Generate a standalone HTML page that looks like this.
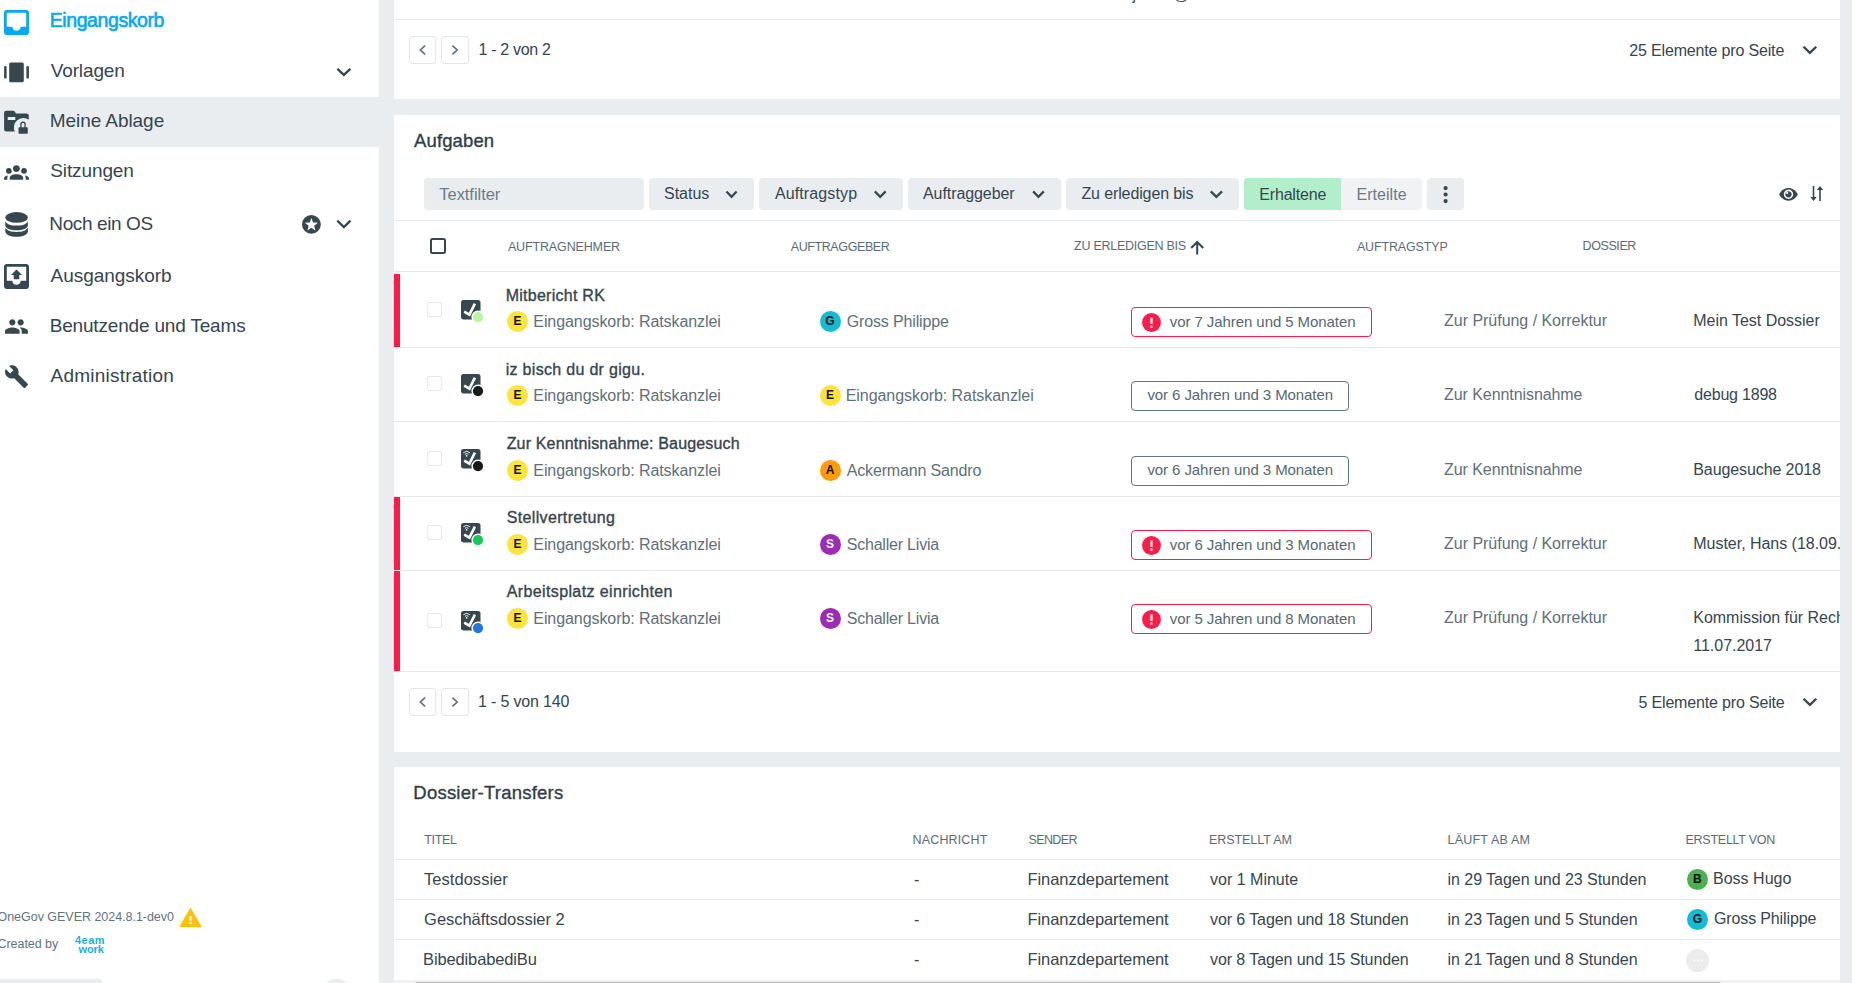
<!DOCTYPE html>
<html><head><meta charset="utf-8"><style>
html,body{margin:0;padding:0;}
body{width:1852px;height:983px;overflow:hidden;position:relative;background:#e9edf0;font-family:"Liberation Sans",sans-serif;}
span{position:absolute;white-space:nowrap;line-height:1;}
svg{display:block;}
</style></head><body>
<div style="position:absolute;left:0px;top:0px;width:379px;height:983px;background:#fff;"></div>
<div style="position:absolute;left:0px;top:97px;width:379px;height:50px;background:#e9edf0;"></div>
<div style="position:absolute;left:394px;top:0px;width:1446px;height:99px;background:#fff;"></div>
<div style="position:absolute;left:394px;top:115px;width:1446px;height:637px;background:#fff;"></div>
<div style="position:absolute;left:394px;top:767px;width:1446px;height:216px;background:#fff;"></div>
<svg style="position:absolute;left:4px;top:10px;" width="25" height="25" viewBox="3 3 18 18"><path fill="#03a9f4" d="M19 3H4.99c-1.11 0-1.98.89-1.98 2L3 19c0 1.1.88 2 1.99 2H19c1.1 0 2-.9 2-2V5c0-1.11-.9-2-2-2zm0 12h-4c0 1.66-1.35 3-3 3s-3-1.34-3-3H4.99V5H19v10z"/></svg>
<svg style="position:absolute;left:0px;top:55px;" width="40" height="30" viewBox="0 0 40 30"><rect x="4.1" y="11.1" width="2.5" height="12.5" rx="1.2" fill="#36474f"/><rect x="9.2" y="7.5" width="14.6" height="19.8" rx="1.5" fill="#36474f"/><rect x="26.4" y="11.1" width="2.5" height="12.5" rx="1.2" fill="#36474f"/></svg>
<svg style="position:absolute;left:0px;top:105px;" width="40" height="35" viewBox="0 0 40 35"><path fill="#36474f" fill-rule="evenodd" d="M6.1 5.7 H13.4 A1.2 1.2 0 0 1 14.4 6.2 L16 8.4 H26.6 A2.2 2.2 0 0 1 28.8 10.6 V14.6 A9.5 9.5 0 0 0 14.8 26.5 H6.3 A2.2 2.2 0 0 1 4.1 24.3 V7.8 A2.1 2.1 0 0 1 6.1 5.7 Z M7.7 11.9 V15 H15.3 V11.9 Z"/>
<path fill="#36474f" fill-rule="evenodd" d="M19.5 22.3 H20.3 V19.2 A2.7 2.7 0 0 1 25.7 19.2 V22.3 H26.8 A1 1 0 0 1 27.8 23.3 V27.8 A1 1 0 0 1 26.8 28.8 H19.5 A1 1 0 0 1 18.5 27.8 V23.3 A1 1 0 0 1 19.5 22.3 Z M21.6 22.3 H24.4 V19.3 A1.4 1.4 0 0 0 21.6 19.3 Z"/></svg>
<svg style="position:absolute;left:0px;top:155px;" width="40" height="35" viewBox="0 0 40 35"><g fill="#36474f"><circle cx="16.4" cy="13.6" r="3.4"/><circle cx="8.9" cy="15.8" r="2.9"/><circle cx="24" cy="15.8" r="2.9"/>
<path d="M9.8 24.8 V22.6 C9.8 20.5 12.6 19.2 16.4 19.2 C20.2 19.2 23.1 20.5 23.1 22.6 V24.8 Z"/>
<path d="M4 24.8 V23.4 C4 21.9 5.5 20.7 8 20.4 C7.5 21.2 7.3 22 7.3 22.8 V24.8 Z"/>
<path d="M29 24.8 V23.4 C29 21.9 27.5 20.7 25 20.4 C25.5 21.2 25.7 22 25.7 22.8 V24.8 Z"/></g>
<circle cx="16.4" cy="13.6" r="4.4" fill="none" stroke="#fff" stroke-width="1.1"/></svg>
<svg style="position:absolute;left:0px;top:205px;" width="40" height="40" viewBox="0 0 40 40"><ellipse cx="16.6" cy="12.4" rx="11.3" ry="5.3" fill="#36474f"/>
<path fill="#36474f" d="M5.3 16.2 C7 19.6 11.5 20.6 16.6 20.6 C21.7 20.6 26.2 19.6 27.9 16.2 V20.2 C27.9 23.1 22.9 25.3 16.6 25.3 C10.3 25.3 5.3 23.1 5.3 20.2 Z"/>
<path fill="#36474f" d="M5.3 22.6 C7 26 11.5 27 16.6 27 C21.7 27 26.2 26 27.9 22.6 V26.4 C27.9 29.3 22.9 31.7 16.6 31.7 C10.3 31.7 5.3 29.3 5.3 26.4 Z"/></svg>
<svg style="position:absolute;left:4px;top:264px;" width="25" height="25" viewBox="3 3 18 18"><path fill="#36474f" d="M19 3H5c-1.1 0-2 .9-2 2v14c0 1.1.9 2 2 2h14c1.1 0 2-.9 2-2V5c0-1.1-.9-2-2-2zm0 12h-4c0 1.66-1.34 3-3 3s-3-1.34-3-3H5V5h14v10zM8 11h2v3h4v-3h2l-4-4-4 4z"/></svg>
<svg style="position:absolute;left:4px;top:313.6px;" width="25" height="25" viewBox="0 0 24 24"><path fill="#36474f" d="M16 11c1.66 0 2.99-1.34 2.99-3S17.66 5 16 5c-1.66 0-3 1.34-3 3s1.34 3 3 3zm-8 0c1.66 0 2.99-1.34 2.99-3S9.66 5 8 5C6.34 5 5 6.34 5 8s1.34 3 3 3zm0 2c-2.33 0-7 1.17-7 3.5V19h14v-2.5c0-2.33-4.67-3.5-7-3.5zm8 0c-.29 0-.62.02-.97.05 1.16.84 1.97 1.97 1.97 3.45V19h6v-2.5c0-2.330-4.67-3.5-7-3.5z"/></svg>
<svg style="position:absolute;left:4px;top:364px;" width="25" height="25" viewBox="0 0 24 24"><path fill="#36474f" d="M22.7 19l-9.1-9.1c.9-2.3.4-5-1.5-6.9-2-2-5-2.4-7.4-1.3L9 6 6 9 1.6 4.7C.4 7.1.9 10.1 2.9 12.1c1.9 1.9 4.6 2.4 6.9 1.5l9.1 9.1c.4.4 1 .4 1.4 0l2.3-2.3c.5-.4.5-1.1.1-1.4z"/></svg>
<svg style="position:absolute;left:300px;top:213px;" width="24" height="24" viewBox="0 0 24 24"><circle cx="11.4" cy="11.4" r="9.4" fill="#36474f"/><polygon fill="#fff" points="11.40,5.00 13.10,9.55 17.96,9.77 14.16,12.80 15.46,17.48 11.40,14.80 7.34,17.48 8.64,12.80 4.84,9.77 9.70,9.55"/></svg>
<svg style="position:absolute;left:178px;top:906px;" width="25" height="22" viewBox="0 0 25 22"><path d="M1.2 21 L12.5 1.4 L23.8 21 Z" fill="#ffc107"/><rect x="11.5" y="10" width="2" height="4.6" fill="#fff"/><rect x="11.5" y="16" width="2" height="2" fill="#fff"/></svg>
<div style="position:absolute;left:0px;top:979px;width:102px;height:6px;background:#e9edf0;border-top-right-radius:4px;"></div>
<div style="position:absolute;left:317.5px;top:979px;width:37px;height:37px;border-radius:50%;background:#e9edf0;"></div>
<div style="position:absolute;left:394px;top:19px;width:1446px;height:1px;background:#e5e9ec;"></div>
<div style="position:absolute;left:409px;top:36px;width:25px;height:26px;border:1px solid #e2e7ea;border-radius:3px;background:#fff"></div>
<svg style="position:absolute;left:0;top:0;overflow:visible" width="1" height="1"><polyline points="425.1,45.6 420.3,50.0 425.1,54.4" fill="none" stroke="#5b6e7a" stroke-width="1.6"/></svg>
<div style="position:absolute;left:441px;top:36px;width:26px;height:26px;border:1px solid #e2e7ea;border-radius:3px;background:#fff"></div>
<svg style="position:absolute;left:0;top:0;overflow:visible" width="1" height="1"><polyline points="452.4,45.6 457.2,50.0 452.4,54.4" fill="none" stroke="#5b6e7a" stroke-width="1.6"/></svg>
<svg style="position:absolute;left:0;top:0;overflow:visible" width="1" height="1"><polyline points="1803.5496,46.7496 1809.9,52.9032 1816.2504,46.7496" fill="none" stroke="#36474f" stroke-width="2.4" stroke-linecap="butt" stroke-miterlimit="10"/></svg>
<div style="position:absolute;left:424px;top:178px;width:220px;height:32px;background:#e9edf0;border-radius:4px"></div>
<div style="position:absolute;left:649px;top:178px;width:105px;height:32px;background:#e9edf0;border-radius:4px"></div>
<svg style="position:absolute;left:0;top:0;overflow:visible" width="1" height="1"><polyline points="726.4788000000001,191.37879999999998 731.55,196.8446 736.6211999999999,191.37879999999998" fill="none" stroke="#36474f" stroke-width="2.2" stroke-linecap="butt" stroke-miterlimit="10"/></svg>
<div style="position:absolute;left:759px;top:178px;width:144px;height:32px;background:#e9edf0;border-radius:4px"></div>
<svg style="position:absolute;left:0;top:0;overflow:visible" width="1" height="1"><polyline points="874.7788,191.37879999999998 880.2,196.8446 885.6211999999999,191.37879999999998" fill="none" stroke="#36474f" stroke-width="2.2" stroke-linecap="butt" stroke-miterlimit="10"/></svg>
<div style="position:absolute;left:908px;top:178px;width:153px;height:32px;background:#e9edf0;border-radius:4px"></div>
<svg style="position:absolute;left:0;top:0;overflow:visible" width="1" height="1"><polyline points="1033.0788,191.37879999999998 1038.4499999999998,196.8446 1043.8211999999999,191.37879999999998" fill="none" stroke="#36474f" stroke-width="2.2" stroke-linecap="butt" stroke-miterlimit="10"/></svg>
<div style="position:absolute;left:1066px;top:178px;width:173px;height:32px;background:#e9edf0;border-radius:4px"></div>
<svg style="position:absolute;left:0;top:0;overflow:visible" width="1" height="1"><polyline points="1210.7788,191.37879999999998 1216.4,196.8446 1222.0212,191.37879999999998" fill="none" stroke="#36474f" stroke-width="2.2" stroke-linecap="butt" stroke-miterlimit="10"/></svg>
<div style="position:absolute;left:1244px;top:178px;width:178px;height:32px;background:#f0f2f4;border-radius:4px;overflow:hidden"><div style="width:97px;height:32px;background:#b3eecb"></div></div>
<div style="position:absolute;left:1427px;top:178px;width:37px;height:32px;background:#e9edf0;border-radius:4px"></div>
<svg style="position:absolute;left:1440px;top:183px;" width="12" height="22" viewBox="0 0 12 22"><circle cx="5.6" cy="5.1" r="2.1" fill="#36474f"/><circle cx="5.6" cy="11.5" r="2.1" fill="#36474f"/><circle cx="5.6" cy="18.1" r="2.1" fill="#36474f"/></svg>
<svg style="position:absolute;left:1778px;top:186px;" width="21" height="16" viewBox="0 0 21 16"><path fill="#36474f" fill-rule="evenodd" d="M1.1 8.3 C3.2 4.2 6.6 1.9 10.5 1.9 C14.4 1.9 17.8 4.2 19.9 8.3 C17.8 12.4 14.4 14.7 10.5 14.7 C6.6 14.7 3.2 12.4 1.1 8.3 Z M10.5 3.6 A4.7 4.7 0 1 0 10.5 13 A4.7 4.7 0 1 0 10.5 3.6 Z"/><circle cx="10.5" cy="8.3" r="3.1" fill="#36474f"/><circle cx="9.2" cy="6.9" r="1.1" fill="#fff"/></svg>
<svg style="position:absolute;left:1806px;top:184px;" width="20" height="20" viewBox="0 0 20 20"><rect x="6.7" y="2" width="1.6" height="12" fill="#36474f"/><polygon points="4.3,13 10.7,13 7.5,17" fill="#36474f"/><rect x="13.2" y="5" width="1.6" height="12" fill="#36474f"/><polygon points="10.8,6 17.2,6 14,2" fill="#36474f"/></svg>
<div style="position:absolute;left:394px;top:220px;width:1446px;height:1px;background:#e5e9ec;"></div>
<div style="position:absolute;left:430px;top:238px;width:12.4px;height:12.4px;border:2.3px solid #36474f;border-radius:2.5px"></div>
<svg style="position:absolute;left:1188px;top:240px;" width="19" height="16" viewBox="0 0 19 16"><path d="M9.2 14.5 V2.2 M3.2 8 L9.2 2 L15.2 8" fill="none" stroke="#36474f" stroke-width="2"/></svg>
<div style="position:absolute;left:394px;top:271px;width:1446px;height:1px;background:#e5e9ec;"></div>
<div style="position:absolute;left:394px;top:274px;width:6px;height:73px;background:#ff1a47;"></div>
<div style="position:absolute;left:394px;top:347px;width:1446px;height:1px;background:#e5e9ec;"></div>
<div style="position:absolute;left:427px;top:302.1px;width:13px;height:13px;border:1.5px solid #e5e9ec;border-radius:2px"></div>
<svg style="position:absolute;left:461px;top:300.1px;" width="24" height="24" viewBox="0 0 24 24"><defs><mask id="m300"><rect width="30" height="30" fill="#fff"/><circle cx="17" cy="17.1" r="6.6" fill="#000"/></mask></defs><g mask="url(#m300)"><rect x="0" y="0" width="19.5" height="19.4" rx="2.6" fill="#36474f"/><polyline points="3.2,11.6 8.4,14.6 13.9,3.6" fill="none" stroke="#fff" stroke-width="2.6"/></g><circle cx="17" cy="17.1" r="5.1" fill="#bdf4a2"/></svg>
<div style="position:absolute;left:507.0px;top:311.0px;width:21px;height:21px;border-radius:50%;background:#fde43a;color:#111;font:700 12px/21.5px 'Liberation Sans',sans-serif;text-align:center">E</div>
<div style="position:absolute;left:819.5px;top:311.0px;width:21px;height:21px;border-radius:50%;background:#12bcd4;color:#111;font:700 12px/21.5px 'Liberation Sans',sans-serif;text-align:center">G</div>
<div style="position:absolute;left:1131px;top:307px;width:239px;height:28px;border:1px solid #ff1a47;border-radius:4px"></div>
<svg style="position:absolute;left:1141.7px;top:313px;" width="20" height="20" viewBox="0 0 20 20"><circle cx="9.5" cy="9.5" r="9.4" fill="#ff1a47"/><rect x="8.4" y="4.3" width="2.2" height="6.6" rx="0.5" fill="#fff"/><rect x="8.4" y="12.4" width="2.2" height="2.3" rx="0.5" fill="#fff"/></svg>
<div style="position:absolute;left:394px;top:421px;width:1446px;height:1px;background:#e5e9ec;"></div>
<div style="position:absolute;left:427px;top:376.1px;width:13px;height:13px;border:1.5px solid #e5e9ec;border-radius:2px"></div>
<svg style="position:absolute;left:461px;top:374.1px;" width="24" height="24" viewBox="0 0 24 24"><defs><mask id="m374"><rect width="30" height="30" fill="#fff"/><circle cx="17" cy="17.1" r="6.6" fill="#000"/></mask></defs><g mask="url(#m374)"><rect x="0" y="0" width="19.5" height="19.4" rx="2.6" fill="#36474f"/><polyline points="3.2,11.6 8.4,14.6 13.9,3.6" fill="none" stroke="#fff" stroke-width="2.6"/></g><circle cx="17" cy="17.1" r="5.1" fill="#181a1b"/></svg>
<div style="position:absolute;left:507.0px;top:385.0px;width:21px;height:21px;border-radius:50%;background:#fde43a;color:#111;font:700 12px/21.5px 'Liberation Sans',sans-serif;text-align:center">E</div>
<div style="position:absolute;left:819.5px;top:385.0px;width:21px;height:21px;border-radius:50%;background:#fde43a;color:#111;font:700 12px/21.5px 'Liberation Sans',sans-serif;text-align:center">E</div>
<div style="position:absolute;left:1131px;top:381px;width:215.6px;height:27.6px;border:1.2px solid #607380;border-radius:4px"></div>
<div style="position:absolute;left:394px;top:496px;width:1446px;height:1px;background:#e5e9ec;"></div>
<div style="position:absolute;left:427px;top:451px;width:13px;height:13px;border:1.5px solid #e5e9ec;border-radius:2px"></div>
<svg style="position:absolute;left:461px;top:448.9px;" width="24" height="24" viewBox="0 0 24 24"><defs><mask id="m448"><rect width="30" height="30" fill="#fff"/><circle cx="17" cy="17.1" r="6.6" fill="#000"/></mask></defs><g mask="url(#m448)"><rect x="0" y="0" width="19.5" height="19.4" rx="2.6" fill="#36474f"/><polyline points="3.2,11.6 8.4,14.6 13.9,3.6" fill="none" stroke="#fff" stroke-width="2.6"/><path d="M2.4 3.7 A5 5 0 0 1 8.9 3.7 M3.9 5.3 A3 3 0 0 1 7.4 5.3" fill="none" stroke="#fff" stroke-width="0.9"/><circle cx="5.65" cy="6.9" r="0.8" fill="#fff"/></g><circle cx="17" cy="17.1" r="5.1" fill="#181a1b"/></svg>
<div style="position:absolute;left:507.0px;top:460.0px;width:21px;height:21px;border-radius:50%;background:#fde43a;color:#111;font:700 12px/21.5px 'Liberation Sans',sans-serif;text-align:center">E</div>
<div style="position:absolute;left:819.5px;top:460.0px;width:21px;height:21px;border-radius:50%;background:#ff9a0a;color:#111;font:700 12px/21.5px 'Liberation Sans',sans-serif;text-align:center">A</div>
<div style="position:absolute;left:1131px;top:456px;width:215.6px;height:27.6px;border:1.2px solid #607380;border-radius:4px"></div>
<div style="position:absolute;left:394px;top:497px;width:6px;height:73px;background:#ff1a47;"></div>
<div style="position:absolute;left:394px;top:570px;width:1446px;height:1px;background:#e5e9ec;"></div>
<div style="position:absolute;left:427px;top:525px;width:13px;height:13px;border:1.5px solid #e5e9ec;border-radius:2px"></div>
<svg style="position:absolute;left:461px;top:523px;" width="24" height="24" viewBox="0 0 24 24"><defs><mask id="m523"><rect width="30" height="30" fill="#fff"/><circle cx="17" cy="17.1" r="6.6" fill="#000"/></mask></defs><g mask="url(#m523)"><rect x="0" y="0" width="19.5" height="19.4" rx="2.6" fill="#36474f"/><polyline points="3.2,11.6 8.4,14.6 13.9,3.6" fill="none" stroke="#fff" stroke-width="2.6"/><path d="M2.4 3.7 A5 5 0 0 1 8.9 3.7 M3.9 5.3 A3 3 0 0 1 7.4 5.3" fill="none" stroke="#fff" stroke-width="0.9"/><circle cx="5.65" cy="6.9" r="0.8" fill="#fff"/></g><circle cx="17" cy="17.1" r="5.1" fill="#12c95a"/></svg>
<div style="position:absolute;left:507.0px;top:534.0px;width:21px;height:21px;border-radius:50%;background:#fde43a;color:#111;font:700 12px/21.5px 'Liberation Sans',sans-serif;text-align:center">E</div>
<div style="position:absolute;left:819.5px;top:534.0px;width:21px;height:21px;border-radius:50%;background:#9c2bb5;color:#fff;font:700 12px/21.5px 'Liberation Sans',sans-serif;text-align:center">S</div>
<div style="position:absolute;left:1131px;top:530px;width:239px;height:28px;border:1px solid #ff1a47;border-radius:4px"></div>
<svg style="position:absolute;left:1141.7px;top:536px;" width="20" height="20" viewBox="0 0 20 20"><circle cx="9.5" cy="9.5" r="9.4" fill="#ff1a47"/><rect x="8.4" y="4.3" width="2.2" height="6.6" rx="0.5" fill="#fff"/><rect x="8.4" y="12.4" width="2.2" height="2.3" rx="0.5" fill="#fff"/></svg>
<div style="position:absolute;left:394px;top:571px;width:6px;height:100px;background:#ff1a47;"></div>
<div style="position:absolute;left:394px;top:671px;width:1446px;height:1px;background:#e5e9ec;"></div>
<div style="position:absolute;left:427px;top:613px;width:13px;height:13px;border:1.5px solid #e5e9ec;border-radius:2px"></div>
<svg style="position:absolute;left:461px;top:611.3px;" width="24" height="24" viewBox="0 0 24 24"><defs><mask id="m611"><rect width="30" height="30" fill="#fff"/><circle cx="17" cy="17.1" r="6.6" fill="#000"/></mask></defs><g mask="url(#m611)"><rect x="0" y="0" width="19.5" height="19.4" rx="2.6" fill="#36474f"/><polyline points="3.2,11.6 8.4,14.6 13.9,3.6" fill="none" stroke="#fff" stroke-width="2.6"/><path d="M2.4 3.7 A5 5 0 0 1 8.9 3.7 M3.9 5.3 A3 3 0 0 1 7.4 5.3" fill="none" stroke="#fff" stroke-width="0.9"/><circle cx="5.65" cy="6.9" r="0.8" fill="#fff"/></g><circle cx="17" cy="17.1" r="5.1" fill="#2177da"/></svg>
<div style="position:absolute;left:507.0px;top:608.0px;width:21px;height:21px;border-radius:50%;background:#fde43a;color:#111;font:700 12px/21.5px 'Liberation Sans',sans-serif;text-align:center">E</div>
<div style="position:absolute;left:819.5px;top:608.0px;width:21px;height:21px;border-radius:50%;background:#9c2bb5;color:#fff;font:700 12px/21.5px 'Liberation Sans',sans-serif;text-align:center">S</div>
<div style="position:absolute;left:1131px;top:604px;width:239px;height:28px;border:1px solid #ff1a47;border-radius:4px"></div>
<svg style="position:absolute;left:1141.7px;top:610px;" width="20" height="20" viewBox="0 0 20 20"><circle cx="9.5" cy="9.5" r="9.4" fill="#ff1a47"/><rect x="8.4" y="4.3" width="2.2" height="6.6" rx="0.5" fill="#fff"/><rect x="8.4" y="12.4" width="2.2" height="2.3" rx="0.5" fill="#fff"/></svg>
<div style="position:absolute;left:409px;top:688px;width:25px;height:26px;border:1px solid #e2e7ea;border-radius:3px;background:#fff"></div>
<svg style="position:absolute;left:0;top:0;overflow:visible" width="1" height="1"><polyline points="425.1,697.6 420.3,702.0 425.1,706.4" fill="none" stroke="#5b6e7a" stroke-width="1.6"/></svg>
<div style="position:absolute;left:441px;top:688px;width:26px;height:26px;border:1px solid #e2e7ea;border-radius:3px;background:#fff"></div>
<svg style="position:absolute;left:0;top:0;overflow:visible" width="1" height="1"><polyline points="452.4,697.6 457.2,702.0 452.4,706.4" fill="none" stroke="#5b6e7a" stroke-width="1.6"/></svg>
<svg style="position:absolute;left:0;top:0;overflow:visible" width="1" height="1"><polyline points="1803.5496,698.7496 1809.9,704.9032 1816.2504,698.7496" fill="none" stroke="#36474f" stroke-width="2.4" stroke-linecap="butt" stroke-miterlimit="10"/></svg>
<div style="position:absolute;left:394px;top:859px;width:1446px;height:1px;background:#e5e9ec;"></div>
<div style="position:absolute;left:394px;top:899px;width:1446px;height:1px;background:#e5e9ec;"></div>
<div style="position:absolute;left:394px;top:939px;width:1446px;height:1px;background:#e5e9ec;"></div>
<div style="position:absolute;left:1686.8px;top:868.9px;width:21px;height:21px;border-radius:50%;background:#4caf50;color:#111;font:700 12px/21.5px 'Liberation Sans',sans-serif;text-align:center">B</div>
<div style="position:absolute;left:1686.8px;top:908.6px;width:21px;height:21px;border-radius:50%;background:#12bcd4;color:#111;font:700 12px/21.5px 'Liberation Sans',sans-serif;text-align:center">G</div>
<div style="position:absolute;left:1686px;top:949.2px;width:23px;height:23px;border-radius:50%;background:#ececec"></div>
<svg style="position:absolute;left:1692px;top:958px;" width="12" height="5" viewBox="0 0 12 5"><circle cx="2.5" cy="2.5" r="1" fill="#fff"/><circle cx="6" cy="2.5" r="1" fill="#fff"/><circle cx="9.5" cy="2.5" r="1" fill="#fff"/></svg>
<div style="position:absolute;left:394px;top:980px;width:1446px;height:3px;background:#f1f1f1;"></div>
<div style="position:absolute;left:415px;top:981.6px;width:1306px;height:2px;background:#b9b9b9;border-radius:2px 2px 0 0;"></div>
<svg style="position:absolute;left:0;top:0;overflow:visible" width="1" height="1"><polyline points="337.41420000000005,68.8142 343.9,74.8739 350.38579999999996,68.8142" fill="none" stroke="#36474f" stroke-width="2.3" stroke-linecap="butt" stroke-miterlimit="10"/></svg>
<svg style="position:absolute;left:0;top:0;overflow:visible" width="1" height="1"><polyline points="337.3142,220.6142 343.9,227.07389999999998 350.4858,220.6142" fill="none" stroke="#36474f" stroke-width="2.3" stroke-linecap="butt" stroke-miterlimit="10"/></svg>
<span style="-webkit-text-stroke:0.6px #03a9f4;left:49.70px;top:11px;font-size:19.5px;font-weight:400;color:#03a9f4;letter-spacing:-0.409px;">Eingangskorb</span>
<span style="left:50.70px;top:61px;font-size:19px;font-weight:400;color:#36454f;letter-spacing:-0.120px;">Vorlagen</span>
<span style="left:49.70px;top:111px;font-size:19px;font-weight:400;color:#36454f;letter-spacing:-0.057px;">Meine Ablage</span>
<span style="left:50.30px;top:161px;font-size:19px;font-weight:400;color:#36454f;letter-spacing:-0.118px;">Sitzungen</span>
<span style="left:49.30px;top:214px;font-size:19px;font-weight:400;color:#36454f;letter-spacing:-0.385px;">Noch ein OS</span>
<span style="left:50.50px;top:266px;font-size:19px;font-weight:400;color:#36454f;letter-spacing:-0.036px;">Ausgangskorb</span>
<span style="left:49.70px;top:316px;font-size:19px;font-weight:400;color:#36454f;letter-spacing:-0.176px;">Benutzende und Teams</span>
<span style="left:50.50px;top:366px;font-size:19px;font-weight:400;color:#36454f;letter-spacing:0.230px;">Administration</span>
<span style="left:-2.50px;top:911px;font-size:12.5px;font-weight:400;color:#5f7380;letter-spacing:-0.029px;">OneGov GEVER 2024.8.1-dev0</span>
<span style="left:-2.50px;top:938px;font-size:12.5px;font-weight:400;color:#5f7380;letter-spacing:-0.044px;">Created by</span>
<span style="left:75.00px;top:935px;font-size:11px;font-weight:700;color:#1aaee8;letter-spacing:0.482px;">4eam</span>
<span style="left:78.40px;top:944px;font-size:11px;font-weight:700;color:#1aaee8;letter-spacing:-0.052px;">work</span>
<span style="left:1132.50px;top:-13px;font-size:16px;font-weight:400;color:#3d4d58;letter-spacing:0.000px;">j</span>
<span style="left:1173.50px;top:-13px;font-size:16px;font-weight:400;color:#3d4d58;letter-spacing:0.000px;">@</span>
<span style="left:478.50px;top:42px;font-size:16px;font-weight:400;color:#36454f;letter-spacing:-0.320px;">1 - 2 von 2</span>
<span style="left:1629.30px;top:43px;font-size:16px;font-weight:400;color:#36454f;letter-spacing:-0.166px;">25 Elemente pro Seite</span>
<span style="-webkit-text-stroke:0.35px #2f3e48;left:414.00px;top:132px;font-size:18.5px;font-weight:400;color:#2f3e48;letter-spacing:0.125px;">Aufgaben</span>
<span style="left:439.30px;top:186px;font-size:16.5px;font-weight:400;color:#6b7c87;letter-spacing:-0.049px;">Textfilter</span>
<span style="left:664.00px;top:186px;font-size:16px;font-weight:400;color:#36454f;letter-spacing:-0.012px;">Status</span>
<span style="left:774.90px;top:186px;font-size:16px;font-weight:400;color:#36454f;letter-spacing:0.127px;">Auftragstyp</span>
<span style="left:923.00px;top:186px;font-size:16px;font-weight:400;color:#36454f;letter-spacing:-0.080px;">Auftraggeber</span>
<span style="left:1081.40px;top:186px;font-size:16px;font-weight:400;color:#36454f;letter-spacing:-0.116px;">Zu erledigen bis</span>
<span style="left:1259.30px;top:187px;font-size:16px;font-weight:400;color:#36454f;letter-spacing:-0.187px;">Erhaltene</span>
<span style="left:1356.50px;top:187px;font-size:16px;font-weight:400;color:#6b7b85;letter-spacing:0.043px;">Erteilte</span>
<span style="left:507.90px;top:241px;font-size:12.5px;font-weight:400;color:#5b6b76;letter-spacing:-0.139px;">AUFTRAGNEHMER</span>
<span style="left:790.70px;top:241px;font-size:12.5px;font-weight:400;color:#5b6b76;letter-spacing:-0.396px;">AUFTRAGGEBER</span>
<span style="left:1074.10px;top:240px;font-size:12.5px;font-weight:400;color:#5b6b76;letter-spacing:-0.264px;">ZU ERLEDIGEN BIS</span>
<span style="left:1356.90px;top:241px;font-size:12.5px;font-weight:400;color:#5b6b76;letter-spacing:-0.143px;">AUFTRAGSTYP</span>
<span style="left:1582.60px;top:240px;font-size:12.5px;font-weight:400;color:#5b6b76;letter-spacing:-0.423px;">DOSSIER</span>
<span style="-webkit-text-stroke:0.35px #36454f;left:505.70px;top:288px;font-size:16px;font-weight:400;color:#36454f;letter-spacing:0.262px;">Mitbericht RK</span>
<span style="left:533.30px;top:314px;font-size:16px;font-weight:400;color:#5f6f7a;letter-spacing:-0.078px;">Eingangskorb: Ratskanzlei</span>
<span style="left:846.70px;top:314px;font-size:16px;font-weight:400;color:#5f6f7a;letter-spacing:-0.142px;">Gross Philippe</span>
<span style="left:1169.80px;top:314px;font-size:15px;font-weight:400;color:#566873;letter-spacing:-0.075px;">vor 7 Jahren und 5 Monaten</span>
<span style="left:1444.10px;top:313px;font-size:16px;font-weight:400;color:#5f6f7a;letter-spacing:-0.031px;">Zur Prüfung / Korrektur</span>
<span style="left:1693.30px;top:313px;font-size:16px;font-weight:400;color:#36454f;letter-spacing:-0.026px;">Mein Test Dossier</span>
<span style="-webkit-text-stroke:0.35px #36454f;left:505.70px;top:362px;font-size:16px;font-weight:400;color:#36454f;letter-spacing:0.307px;">iz bisch du dr gigu.</span>
<span style="left:533.30px;top:388px;font-size:16px;font-weight:400;color:#5f6f7a;letter-spacing:-0.078px;">Eingangskorb: Ratskanzlei</span>
<span style="left:845.70px;top:388px;font-size:16px;font-weight:400;color:#5f6f7a;letter-spacing:-0.058px;">Eingangskorb: Ratskanzlei</span>
<span style="left:1147.40px;top:387px;font-size:15px;font-weight:400;color:#566873;letter-spacing:-0.079px;">vor 6 Jahren und 3 Monaten</span>
<span style="left:1444.10px;top:387px;font-size:16px;font-weight:400;color:#5f6f7a;letter-spacing:-0.077px;">Zur Kenntnisnahme</span>
<span style="left:1694.30px;top:387px;font-size:16px;font-weight:400;color:#36454f;letter-spacing:-0.204px;">debug 1898</span>
<span style="-webkit-text-stroke:0.35px #36454f;left:506.70px;top:436px;font-size:16px;font-weight:400;color:#36454f;letter-spacing:0.160px;">Zur Kenntnisnahme: Baugesuch</span>
<span style="left:533.30px;top:463px;font-size:16px;font-weight:400;color:#5f6f7a;letter-spacing:-0.078px;">Eingangskorb: Ratskanzlei</span>
<span style="left:846.70px;top:463px;font-size:16px;font-weight:400;color:#5f6f7a;letter-spacing:-0.158px;">Ackermann Sandro</span>
<span style="left:1147.40px;top:462px;font-size:15px;font-weight:400;color:#566873;letter-spacing:-0.079px;">vor 6 Jahren und 3 Monaten</span>
<span style="left:1444.10px;top:462px;font-size:16px;font-weight:400;color:#5f6f7a;letter-spacing:-0.077px;">Zur Kenntnisnahme</span>
<span style="left:1693.30px;top:462px;font-size:16px;font-weight:400;color:#36454f;letter-spacing:-0.100px;">Baugesuche 2018</span>
<span style="-webkit-text-stroke:0.35px #36454f;left:506.70px;top:510px;font-size:16px;font-weight:400;color:#36454f;letter-spacing:0.352px;">Stellvertretung</span>
<span style="left:533.30px;top:537px;font-size:16px;font-weight:400;color:#5f6f7a;letter-spacing:-0.078px;">Eingangskorb: Ratskanzlei</span>
<span style="left:846.70px;top:537px;font-size:16px;font-weight:400;color:#5f6f7a;letter-spacing:-0.204px;">Schaller Livia</span>
<span style="left:1169.80px;top:537px;font-size:15px;font-weight:400;color:#566873;letter-spacing:-0.075px;">vor 6 Jahren und 3 Monaten</span>
<span style="left:1444.10px;top:536px;font-size:16px;font-weight:400;color:#5f6f7a;letter-spacing:-0.031px;">Zur Prüfung / Korrektur</span>
<span style="left:1693.30px;top:536px;font-size:16px;font-weight:400;color:#36454f;letter-spacing:-0.030px;">Muster, Hans (18.09.1970)</span>
<span style="-webkit-text-stroke:0.35px #36454f;left:506.70px;top:584px;font-size:16px;font-weight:400;color:#36454f;letter-spacing:0.381px;">Arbeitsplatz einrichten</span>
<span style="left:533.30px;top:611px;font-size:16px;font-weight:400;color:#5f6f7a;letter-spacing:-0.078px;">Eingangskorb: Ratskanzlei</span>
<span style="left:846.70px;top:611px;font-size:16px;font-weight:400;color:#5f6f7a;letter-spacing:-0.204px;">Schaller Livia</span>
<span style="left:1169.80px;top:611px;font-size:15px;font-weight:400;color:#566873;letter-spacing:-0.075px;">vor 5 Jahren und 8 Monaten</span>
<span style="left:1444.10px;top:610px;font-size:16px;font-weight:400;color:#5f6f7a;letter-spacing:-0.031px;">Zur Prüfung / Korrektur</span>
<span style="left:1693.30px;top:610px;font-size:16px;font-weight:400;color:#36454f;letter-spacing:-0.030px;">Kommission für Rechtsfragen</span>
<span style="left:1693.30px;top:638px;font-size:16px;font-weight:400;color:#36454f;letter-spacing:-0.030px;">11.07.2017</span>
<span style="left:478.10px;top:694px;font-size:16px;font-weight:400;color:#36454f;letter-spacing:-0.183px;">1 - 5 von 140</span>
<span style="left:1638.50px;top:695px;font-size:16px;font-weight:400;color:#36454f;letter-spacing:-0.170px;">5 Elemente pro Seite</span>
<span style="-webkit-text-stroke:0.35px #2f3e48;left:413.30px;top:784px;font-size:18.5px;font-weight:400;color:#2f3e48;letter-spacing:0.227px;">Dossier-Transfers</span>
<span style="left:424.20px;top:834px;font-size:12.5px;font-weight:400;color:#5b6b76;letter-spacing:-0.295px;">TITEL</span>
<span style="left:912.60px;top:834px;font-size:12.5px;font-weight:400;color:#5b6b76;letter-spacing:0.141px;">NACHRICHT</span>
<span style="left:1028.50px;top:834px;font-size:12.5px;font-weight:400;color:#5b6b76;letter-spacing:-0.613px;">SENDER</span>
<span style="left:1209.00px;top:834px;font-size:12.5px;font-weight:400;color:#5b6b76;letter-spacing:-0.060px;">ERSTELLT AM</span>
<span style="left:1447.50px;top:834px;font-size:12.5px;font-weight:400;color:#5b6b76;letter-spacing:0.215px;">LÄUFT AB AM</span>
<span style="left:1685.50px;top:834px;font-size:12.5px;font-weight:400;color:#5b6b76;letter-spacing:-0.256px;">ERSTELLT VON</span>
<span style="left:424.10px;top:871px;font-size:16.5px;font-weight:400;color:#36454f;letter-spacing:0.024px;">Testdossier</span>
<span style="left:914.00px;top:872px;font-size:16px;font-weight:400;color:#36454f;letter-spacing:0.000px;">-</span>
<span style="left:1027.50px;top:871px;font-size:16.5px;font-weight:400;color:#36454f;letter-spacing:-0.061px;">Finanzdepartement</span>
<span style="left:1210.00px;top:872px;font-size:16px;font-weight:400;color:#36454f;letter-spacing:0.005px;">vor 1 Minute</span>
<span style="left:1447.50px;top:872px;font-size:16px;font-weight:400;color:#36454f;letter-spacing:-0.039px;">in 29 Tagen und 23 Stunden</span>
<span style="left:1713.00px;top:871px;font-size:16px;font-weight:400;color:#36454f;letter-spacing:0.017px;">Boss Hugo</span>
<span style="left:424.10px;top:911px;font-size:16.5px;font-weight:400;color:#36454f;letter-spacing:-0.044px;">Geschäftsdossier 2</span>
<span style="left:914.00px;top:912px;font-size:16px;font-weight:400;color:#36454f;letter-spacing:0.000px;">-</span>
<span style="left:1027.50px;top:911px;font-size:16.5px;font-weight:400;color:#36454f;letter-spacing:-0.061px;">Finanzdepartement</span>
<span style="left:1210.00px;top:912px;font-size:16px;font-weight:400;color:#36454f;letter-spacing:-0.086px;">vor 6 Tagen und 18 Stunden</span>
<span style="left:1447.50px;top:912px;font-size:16px;font-weight:400;color:#36454f;letter-spacing:-0.040px;">in 23 Tagen und 5 Stunden</span>
<span style="left:1714.00px;top:911px;font-size:16px;font-weight:400;color:#36454f;letter-spacing:-0.134px;">Gross Philippe</span>
<span style="left:423.10px;top:951px;font-size:16.5px;font-weight:400;color:#36454f;letter-spacing:-0.140px;">BibedibabediBu</span>
<span style="left:914.00px;top:952px;font-size:16px;font-weight:400;color:#36454f;letter-spacing:0.000px;">-</span>
<span style="left:1027.50px;top:951px;font-size:16.5px;font-weight:400;color:#36454f;letter-spacing:-0.061px;">Finanzdepartement</span>
<span style="left:1210.00px;top:952px;font-size:16px;font-weight:400;color:#36454f;letter-spacing:-0.080px;">vor 8 Tagen und 15 Stunden</span>
<span style="left:1447.50px;top:952px;font-size:16px;font-weight:400;color:#36454f;letter-spacing:-0.040px;">in 21 Tagen und 8 Stunden</span>
<div style="position:absolute;left:1840px;top:0;width:12px;height:983px;background:#e9edf0"></div>
</body></html>
